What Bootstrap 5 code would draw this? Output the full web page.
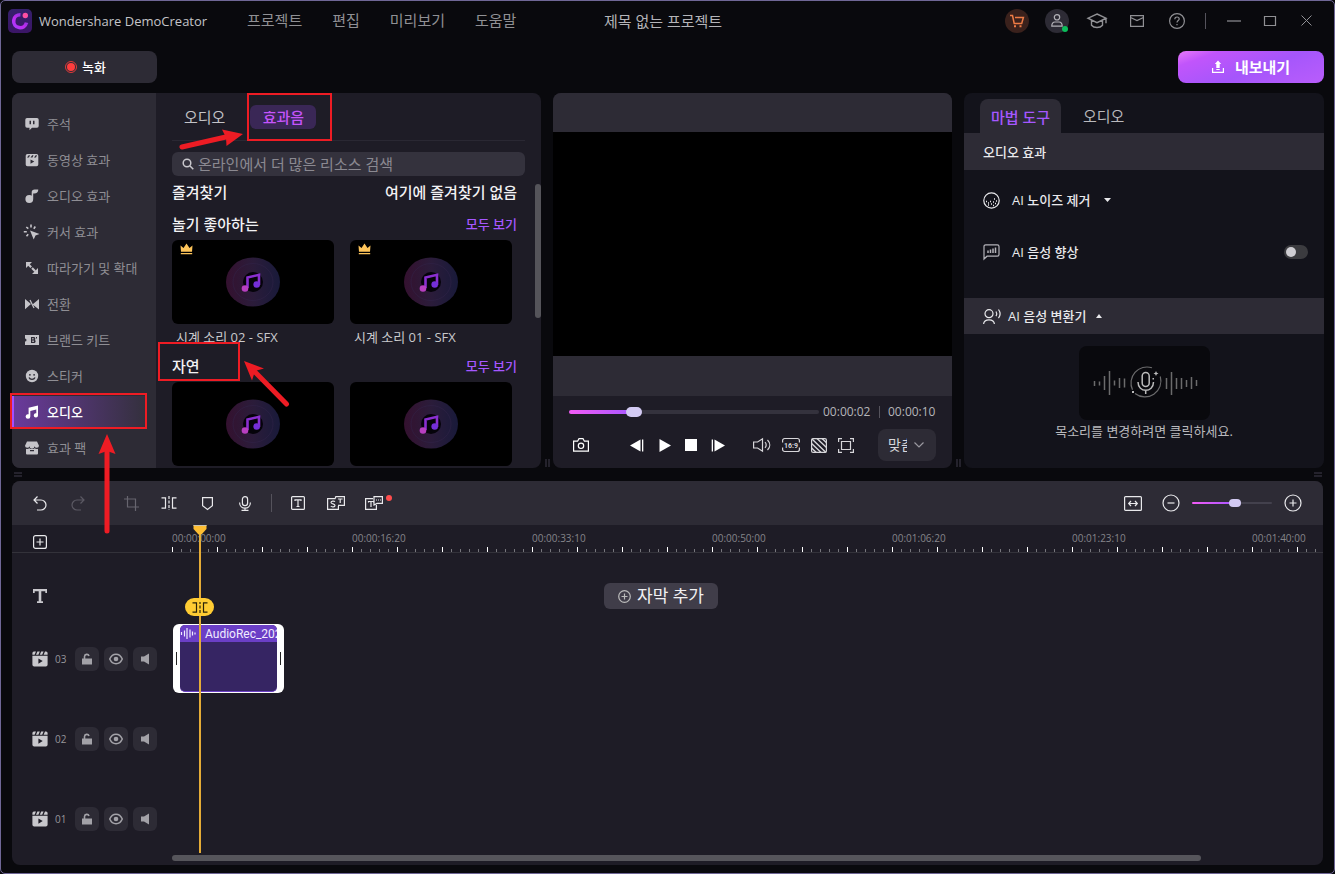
<!DOCTYPE html>
<html lang="ko" data-bs-theme="dark">
<head>
<meta charset="utf-8">
<meta name="viewport" content="width=device-width, initial-scale=1">
<title>Wondershare DemoCreator</title>
<link href="https://cdn.jsdelivr.net/npm/bootstrap@5.3.0/dist/css/bootstrap.min.css" rel="stylesheet">
<style>
:root{--raised:#2d2b35;--panel:#1e1c26;--deep:#13131b;--base:#09090d;--violet:#a557ff;--mark-red:#ee1c24}
body{background:var(--base);color:#e9e9ec;font-family:"Open Sans","Noto Sans CJK KR",sans-serif;font-size:13px;line-height:20px}
svg{display:block;flex:none;overflow:visible}
.ic{fill:none;stroke:currentColor;stroke-width:1.2}
.fl{fill:currentColor;stroke:none}
button,a,input,select{color:inherit}
.app-window{border:1px solid #6f6796;border-radius:5px}
.bare{border:0;background:none;padding:0;display:flex;align-items:center;justify-content:center;flex:none}
.s24{width:24px;height:24px}
.t15{font-size:15px;line-height:22px}
.mid{font-weight:500}
.titlebar{height:39px;display:grid;grid-template-columns:1fr auto 1fr;align-items:center;padding:0 16px 0 7px}
.brand{font-size:13px;color:#c4c4c8;margin:0 0 0 7px;width:208px}
.menus{gap:30px;padding-bottom:2px}
.menus a{color:#909094;text-decoration:none}
.dim{color:#909094}
.vline{width:1px;background:#55535c;flex:none}
.presence{position:absolute;right:1px;bottom:1px;width:6px;height:6px;border-radius:50%;background:#0bbd5b}
.pill-btn{width:145px;height:32px;border:0;border-radius:8px;background:var(--raised)}
.export-btn{width:146px;background:linear-gradient(160deg,#e879f9 0,#c155fb 18%,#a556fb 55%,#b95dfb 100%);color:#fff}
.work{padding:0 10px 8px 11px}
.panels{display:grid;grid-template-columns:529fr 399fr 360fr;gap:12px}
.panel{border-radius:8px;background:var(--panel);position:relative;min-width:0}
.grip-v::after{content:"";position:absolute;right:-9px;bottom:1px;width:5px;height:8px;border:solid #24222c;border-width:0 2px}
.grip-h{width:8px;height:5px;border:solid #24222c;border-width:2px 0}
.split{height:13px;padding:0 2px}
.side{width:144px;flex:none;background:var(--raised);border-radius:8px 0 0 8px;padding:15px 0 0}
.side a{display:flex;align-items:center;gap:8px;height:31px;margin:0 9px 5px 0;padding-left:13px;color:#8f8e94;text-decoration:none;position:relative;white-space:nowrap}
.side a:last-child{margin-bottom:0}
.side svg{color:#c5c4c9}
.side a.active{background:linear-gradient(90deg,#6b3a9d,#33303c);box-shadow:inset 2px 0 #a44dff;color:#fff;font-weight:500}
.side a.active svg{color:#fff}
.hl-box{position:absolute;border:2px solid var(--mark-red);pointer-events:none}
.hl-arrow{position:absolute;pointer-events:none;fill:var(--mark-red);stroke:var(--mark-red);z-index:5}
.lib{padding:0 16px 2px}
.lib-tabs{height:48px;border-bottom:1px solid #2a2833;padding:0 12px}
.lib-tabs .on{width:66px;height:24px;border-radius:6px;background:#3a2756;color:#c554fb}
.search{height:24px;border-radius:6px;background:#34323d;padding:0 10px;gap:4px;margin-top:11px}
.search input{font-size:15px;line-height:24px;border:0;background:none;outline:0;padding:0;min-width:0}
.search input::placeholder{color:#8b8991;opacity:1}
.lib-row{height:32px;padding-right:8px;color:#f2f2f4}
.lib-row a{color:var(--violet);text-decoration:none;font-size:13px}
.thumbs{display:grid;grid-template-columns:1fr 1fr;gap:16px;padding-right:13px}
.thumb{height:84px;border-radius:6px;background:#000;position:relative}
.crown{position:absolute;left:8px;top:3px}
.cap{height:26px;line-height:27px;padding-left:4px;color:#c9c9cc;white-space:nowrap}
.lib-scroll{position:absolute;right:0;top:91px;width:6px;height:134px;border-radius:3px;background:#55545a}
.stage{background:var(--raised);padding:39px 0 40px;border-radius:8px 8px 0 0}
.screen{aspect-ratio:16/9;background:#000}
.times{font-size:12px;color:#b5b5b9}
input[type=range]{appearance:none;-webkit-appearance:none;background:none;margin:0;height:16px;min-width:0}
input[type=range]::-webkit-slider-runnable-track{height:4px;border-radius:2px;background:linear-gradient(90deg,#f35bf5,#a557ff 26%,#34323d 26%)}
input[type=range]::-webkit-slider-thumb{-webkit-appearance:none;width:16px;height:10px;margin-top:-3px;border-radius:5px;background:#d3caf3}
input.zoom-range::-webkit-slider-runnable-track{height:2px;background:linear-gradient(90deg,#f35bf5,#a557ff 54%,#43414d 54%)}
input.zoom-range::-webkit-slider-thumb{width:12px;height:8px;border-radius:4px}
.fit{position:relative;width:58px;height:32px;background:var(--raised);border-radius:8px}
.fit select{appearance:none;border:0;background:none;width:58px;height:32px;padding:0 29px 0 10px;font-size:14px;text-overflow:clip}
.fit svg{position:absolute;right:12px;top:13px;pointer-events:none;color:#9a99a0}
.props{background:var(--deep)}
.props-tabs{padding:6px 16px 0;height:40px}
.props-tabs .on{width:81px;height:34px;background:var(--raised);border-radius:8px 8px 0 0;color:var(--violet);padding-top:2px}
.props-tabs .off{color:#b9b9bd;height:34px;margin-left:22px}
.strip{background:var(--raised);padding:0 19px}
.prop-row{height:52px;padding:0 16px 0 19px}
.switch-sm{appearance:none;-webkit-appearance:none;width:24px;height:14px;border-radius:7px;background:#3b3b3f;margin:0}
.switch-sm::before{content:"";display:block;width:10px;height:10px;border-radius:50%;background:#cfced3;margin:2px}
.voice{width:131px;height:74px;border-radius:8px;background:var(--base);margin:12px auto 0;color:#bbb}
.tl-tools{height:44px;background:var(--raised);border-radius:8px 8px 0 0;padding:0 21px 0 9px}
.tool{width:38px;height:38px}
.heads{width:160px;flex:none}
.ruler{height:28px;border-bottom:1px solid #33323a}
.ruler-scale{overflow:hidden;min-width:0;background:repeating-linear-gradient(90deg,#fff 0 1px,transparent 1px 45px) 0 100%/100% 5px no-repeat,repeating-linear-gradient(90deg,#77767c 0 1px,transparent 1px 9px) 0 100%/100% 3px no-repeat;margin-right:2px}
.ruler-scale span{flex:0 0 180px;font-size:10px;line-height:14px;padding-top:6px;color:#85858a}
.lane{height:80px}
.lane .heads{padding-left:20px}
.sub-lane{padding-top:20px;height:66px}
.add-sub{margin-left:432px;height:26px;width:114px;border-radius:6px;background:#403d49;color:#f0f0f2;font-size:17px;gap:6px;line-height:26px}
.num{font-size:10px;color:#97969b;margin:0 9px 0 7px;width:11px}
.sq{width:24px;height:24px;border-radius:6px;background:var(--raised);color:#a3a2a8}
.clip-box{width:111px;height:69px;margin:0 0 1px 1px;border-radius:6px;background:#fff;padding:1px 7px;position:relative}
.clip-box::before,.clip-box::after{content:"";position:absolute;top:28px;height:13px;width:1px;background:#222}
.clip-box::before{left:3px}.clip-box::after{right:3px}
.clip-in{background:#362563;border-radius:5px;height:67px;overflow:hidden;border-bottom:1px solid #6b3fc6}
.clip-name{background:#6b3fc6;height:17px;line-height:16px;font-family:Roboto,sans-serif;font-size:12px;color:#f1ecff;white-space:nowrap;gap:10px;padding-left:1px}
.playhead{position:absolute;left:187px;top:0;bottom:12px;width:2px;background:#e5ac37}
.playhead svg{position:absolute;left:-6px;top:0}
.cut-chip{position:absolute;left:-14px;top:73px;width:29px;height:18px;border-radius:9px;background:#ffcc33;color:#2a2208}
.playhead .cut-chip svg{position:static}
.h-scroll{position:absolute;left:160px;right:122px;bottom:4px;height:6px;border-radius:3px;background:#56555b}
</style>
</head>
<body>
<svg width="0" height="0" class="position-absolute">
  <defs>
    <linearGradient id="gLogo" x1="1" y1="0" x2="0" y2="1"><stop stop-color="#7a35d8"/><stop offset=".6" stop-color="#c02bf0"/><stop offset="1" stop-color="#a73bff"/></linearGradient>
    <linearGradient id="gBg" x1="0" y1="0" x2="0" y2="1"><stop stop-color="#35206c"/><stop offset="1" stop-color="#3b1566"/></linearGradient>
    <linearGradient id="gDisc"><stop stop-color="#34112f"/><stop offset=".5" stop-color="#2b1c3a"/><stop offset="1" stop-color="#191a3a"/></linearGradient>
    <symbol id="note" viewBox="0 0 14 14"><path d="M3.6 2.7 13 .6v9.7a2.1 2.1 0 1 1-1.7-2V4.5L5.3 5.9v5.6a2.3 2.3 0 1 1-1.7-2.2z"/></symbol>
    <symbol id="film" viewBox="0 0 16 16"><path fill-rule="evenodd" d="M2 .5h2L2.6 3.7H.4V2A1.6 1.6 0 0 1 2 .5zm3.4 0h2.4L6.4 3.7H4zm3.8 0h2.4l-1.4 3.2H7.8zm3.8 0h1A1.6 1.6 0 0 1 15.6 2v1.7h-4zM.4 4.700h15.2v9.1a1.8 1.8 0 0 1-1.8 1.7H2.2a1.8 1.8 0 0 1-1.8-1.7zm6 2.8v5.3L10.700 10.100z"/></symbol>
    <symbol id="disc" viewBox="0 0 54 50"><ellipse cx="27" cy="25" rx="27" ry="24.500" fill="url(#gDisc)"/><ellipse cx="27" cy="25" rx="20" ry="18.500" fill="none" stroke="#33254a" stroke-width=".5"/><circle cx="27" cy="25" r="10" fill="#05030a"/><path d="M21.500 31V20.500L33 17.800V28" fill="none" stroke="#8a2fd0" stroke-width="2.600"/><circle cx="19" cy="31.500" r="3.300" fill="#b83fc0"/><circle cx="30.700" cy="27.500" r="3.300" fill="#742fd8"/></symbol>
    <symbol id="crown" viewBox="0 0 13 12"><path fill="#fdc45a" d="M.5 2.500 3.500 5 6.500.500 9.500 5l3-2.500-.5 6.200H1zM.800 10h11.400v1.300H.800z"/></symbol>
    <symbol id="cut" viewBox="0 0 16 11"><path d="M.500.800h4v9.400h-4M15.500.800h-4v9.400h4" fill="none" stroke="currentColor" stroke-width="1.200"/><path d="M8-1v13" fill="none" stroke="currentColor" stroke-width="1.200" stroke-dasharray="3 1.500"/></symbol>
    <symbol id="lock" viewBox="0 0 12 12"><path d="M1 5.500h10v6H1z" fill="currentColor"/><path d="M3.500 6V3.500a2.300 2.300 0 0 1 4.500-.500" fill="none" stroke="currentColor" stroke-width="1.600"/></symbol>
    <symbol id="eye" viewBox="0 0 14 12"><path d="M.700 6C3.500-.300 10.500-.300 13.300 6 10.500 12.300 3.500 12.300.700 6z" fill="none" stroke="currentColor" stroke-width="1.500"/><circle cx="7" cy="6" r="2.300" fill="currentColor"/></symbol>
    <symbol id="spk" viewBox="0 0 10 12"><path d="M1 3.500h3L9 .500v11L4 8.500H1z" fill="currentColor"/></symbol>
  </defs>
</svg>

<div class="app-window min-vh-100 d-flex flex-column">
  <header class="titlebar">
    <div class="d-flex align-items-center">
      <svg width="24" height="24" viewBox="0 0 24 24"><rect width="24" height="24" rx="5" fill="url(#gBg)"/><path d="M12.500 5.700a6.500 6.500 0 1 0 6 8" fill="none" stroke="url(#gLogo)" stroke-width="3.600"/><circle cx="17.300" cy="6.500" r="2.700" fill="#ff4fa3"/></svg>
      <span class="brand text-nowrap">Wondershare DemoCreator</span>
      <nav class="menus d-flex t15 text-nowrap"><a href="#">프로젝트</a><a href="#">편집</a><a href="#">미리보기</a><a href="#">도움말</a></nav>
    </div>
    <div class="t15 text-nowrap" style="color:#b4b4b8">제목 없는 프로젝트</div>
    <div class="d-flex align-items-center justify-content-end dim">
      <div class="d-flex gap-3 align-items-center">
        <button class="bare s24 rounded-circle" style="background:#3a211c;color:#ee7b45" aria-label="스토어"><svg class="ic" width="14" height="14" viewBox="0 0 14 14" style="stroke-width:1.500"><path d="M0 1.500h2.500l1.700 8h7.500l1.700-6H5"/><path class="fl" d="M4 11.300h2v2H4zM9.500 11.300h2v2h-2z"/></svg></button>
        <button class="bare s24 rounded-circle position-relative" style="background:var(--raised);color:#b3b2b8" aria-label="계정"><svg class="ic" width="12" height="13" viewBox="0 0 12 13"><circle cx="6" cy="3.300" r="2.700"/><path d="M.800 12.200c0-3 1.600-4.200 3.200-4.200h4c1.600 0 3.200 1.200 3.200 4.200z"/></svg><span class="presence"></span></button>
        <button class="bare s24" aria-label="아카데미"><svg class="ic" width="20" height="16" viewBox="0 0 20 16" style="stroke-width:1.400"><path d="M10 1 19 5.200 10 9.600 1 5.200zM4.500 7v5.200c2.500 3 8.500 3 11 0V7M19 5.200v5"/></svg></button>
        <button class="bare s24" aria-label="메시지"><svg class="ic" width="14" height="12" viewBox="0 0 14 12"><path d="M.600.600h12.800v10.800H.600zM.600 2.500 7 5.500l6.400-3"/></svg></button>
        <button class="bare s24" aria-label="도움말"><svg class="ic" width="16" height="16" viewBox="0 0 16 16"><circle cx="8" cy="8" r="7.400"/><path d="M5.800 6.200c0-3 4.400-2.800 4.400-.200 0 1.500-2.200 1.700-2.200 3.500M8 11v1.200"/></svg></button>
        <span class="vline" style="height:16px"></span>
      </div>
      <div class="d-flex ms-3" style="gap:12px">
        <button class="bare s24" aria-label="최소화"><svg class="ic" width="14" height="12" viewBox="0 0 14 12"><path d="M0 6h14"/></svg></button>
        <button class="bare s24" aria-label="최대화"><svg class="ic" width="12" height="10" viewBox="0 0 12 10"><path d="M.500.500h11v9H.500z"/></svg></button>
        <button class="bare s24" aria-label="닫기"><svg class="ic" width="11" height="11" viewBox="0 0 11 11" style="stroke-width:1"><path d="M.500.500l10 10M10.500.500l-10 10"/></svg></button>
      </div>
    </div>
  </header>

  <main class="work flex-grow-1 d-flex flex-column">
    <div class="d-flex justify-content-between" style="padding:11px 0 10px">
      <button class="pill-btn mid d-flex align-items-center justify-content-center pe-1" style="gap:5px;color:#fff"><svg width="12" height="12" viewBox="0 0 12 12"><circle cx="6" cy="6" r="5.500" fill="none" stroke="#e03a3a"/><circle cx="6" cy="6" r="4" fill="#ff3d3d"/></svg>녹화</button>
      <button class="pill-btn export-btn t15 fw-bold d-flex align-items-center justify-content-center" style="gap:11px"><svg width="12" height="12" viewBox="0 0 12 12" fill="none" stroke="#fff"><path d="M.600 7v4.400h10.800V7" stroke-width="1.200"/><path d="M6-.500 9.200 3H7.700v4H4.300V3H2.800zM4.300 8h3.400v1H4.300z" fill="#fff" stroke="none"/></svg>내보내기</button>
    </div>

    <div class="panels">
      <section class="panel grip-v d-flex">
        <nav class="side">
          <a href="#"><svg class="fl" width="14" height="14" viewBox="0 0 14 14"><path fill-rule="evenodd" d="M2 1h10a1.700 1.700 0 0 1 1.700 1.700V9A1.700 1.700 0 0 1 12 10.700H7L4.500 13.300v-2.600H2A1.700 1.700 0 0 1 .300 9V2.700A1.700 1.700 0 0 1 2 1zm2.500 2.800v3.500H6V3.800zm3.500 0v3.500h1.500V3.800z"/></svg>주석</a>
          <a href="#"><svg class="fl" width="14" height="14" viewBox="0 0 14 14"><path fill-rule="evenodd" d="M2.500 1h9A1.800 1.800 0 0 1 13.300 2.800v8.700a1.800 1.800 0 0 1-1.800 1.800h-9A1.800 1.800 0 0 1 .700 11.500V2.800A1.800 1.800 0 0 1 2.500 1zM2 4.500h2L5 2.300H3.700zm3.500 0h2l1-2.200H7.200zm3.500 0h2l1-2.200h-1.300zM5.500 6.500v4.300L9.300 8.600z"/></svg>동영상 효과</a>
          <a href="#"><svg class="fl" width="14" height="14" viewBox="0 0 14 14"><circle cx="4.300" cy="10" r="3.900"/><path d="M6.700 8.500V3.200C6.700 1.300 8 .500 9.500.500h3.800c0 2.700-1.600 4-4 4H8.200v5z"/></svg>오디오 효과</a>
          <a href="#"><svg class="fl" width="14" height="14" viewBox="0 0 14 14"><path d="m5 5.500 9.500 3.500-4 1.500L8.700 14.500z"/><path d="M6 -.500v3M1.300 2l2 1.700M-1.200 6.800h3M10.300 1.500 8.800 3.700M3.200 9.300l-1.700 2" stroke="currentColor" stroke-width="1.600"/></svg>커서 효과</a>
          <a href="#"><svg class="fl" width="14" height="14" viewBox="0 0 14 14"><path d="M1 1h6L1 7zM13 13H7l6-6z"/><path d="m3 3 8 8" stroke="currentColor" stroke-width="2.200" stroke-dasharray="4.500 1.200"/></svg>따라가기 및 확대</a>
          <a href="#"><svg class="fl" width="14" height="14" viewBox="0 0 14 14"><path d="M0 2 6 7 0 12.300zM14 2v10.500L7.500 7.500z"/><path d="M5 3l4 8" stroke="currentColor" stroke-width="1.300"/></svg>전환</a>
          <a href="#"><svg class="fl" width="14" height="14" viewBox="0 0 14 14"><path fill-rule="evenodd" d="M0 2h14v10H0V8.500a1.500 1.500 0 0 0 0-3zm6 2v6h3c2 0 2-2.700.800-3 .900-.700.700-3-1-3zm1.300 1h1.200v1.500H7.300zm0 2.500h1.500V9H7.300zM11 4v1.500h1V4z"/></svg>브랜드 키트</a>
          <a href="#"><svg class="fl" width="14" height="14" viewBox="0 0 14 14"><circle cx="7" cy="7" r="6.200"/><g fill="#2d2b35"><circle cx="4.900" cy="5.800" r=".9"/><circle cx="9.100" cy="5.800" r=".9"/></g><path d="M4 8.500c1 2.500 5 2.500 6 0" fill="none" stroke="#2d2b35" stroke-width="1.300"/></svg>스티커</a>
          <a href="#" class="active"><svg class="fl" width="14" height="14"><use href="#note"/></svg>오디오
            <span class="hl-box" style="left:-2px;top:-3px;right:0;height:36px"></span>
            <svg class="hl-arrow" style="left:86px;top:38px" width="18" height="102" viewBox="0 0 18 102"><path d="M9 0 17.500 20 9 17 .500 20z" stroke="none"/><path d="M9 16v81" stroke-width="5" stroke-linecap="round"/></svg></a>
          <a href="#"><svg class="fl" width="14" height="14" viewBox="0 0 14 14"><path d="M2 .500h10l2 4.200a2.300 2.300 0 0 1-4.500.500 2.500 2.500 0 0 1-5 0A2.300 2.300 0 0 1 0 4.700z"/><path fill-rule="evenodd" d="M1 7.800c1.300.500 2.500.200 3.300-.600 1.500 1.200 3.900 1.200 5.400 0 .800.800 2 1.100 3.300.600v4.700a1 1 0 0 1-1 1H2a1 1 0 0 1-1-1zM5 9v1.300h4V9z"/></svg>효과 팩</a>
        </nav>
        <div class="lib flex-grow-1 position-relative">
          <div class="lib-tabs d-flex align-items-center t15">
            <button class="bare" style="color:#c3c3c7;margin-right:25px">오디오</button>
            <div class="position-relative"><button class="bare on mid">효과음</button>
              <span class="hl-box" style="left:-3px;top:-12px;width:85px;height:48px"></span>
              <svg class="hl-arrow" style="left:-72px;top:24px" width="66" height="22" viewBox="0 0 66 22"><path d="M65 5 44 .500 48 8.500 48.500 17z" stroke="none"/><path d="M4 18 50 7.500" stroke-width="5" stroke-linecap="round"/></svg></div>
          </div>
          <label class="search d-flex align-items-center"><svg class="ic" width="12" height="12" viewBox="0 0 12 12" style="color:#c9c8cd;stroke-width:1.500"><circle cx="5" cy="5" r="3.800"/><path d="m8 8 3.300 3.300"/></svg><input class="flex-grow-1" type="text" placeholder="온라인에서 더 많은 리소스 검색" aria-label="검색"></label>
          <div class="lib-row d-flex align-items-center justify-content-between t15 mid"><span>즐겨찾기</span><span>여기에 즐겨찾기 없음</span></div>
          <div class="lib-row d-flex align-items-center justify-content-between t15 mid"><span>놀기 좋아하는</span><a href="#">모두 보기</a></div>
          <div class="thumbs">
            <div><div class="thumb d-flex align-items-center justify-content-center"><svg class="crown" width="13" height="12"><use href="#crown"/></svg><svg width="54" height="50"><use href="#disc"/></svg></div><div class="cap">시계 소리 02 - SFX</div></div>
            <div><div class="thumb d-flex align-items-center justify-content-center"><svg class="crown" width="13" height="12"><use href="#crown"/></svg><svg width="54" height="50"><use href="#disc"/></svg></div><div class="cap">시계 소리 01 - SFX</div></div>
          </div>
          <div class="lib-row d-flex align-items-center justify-content-between t15 mid position-relative"><span>자연</span><a href="#">모두 보기</a>
            <span class="hl-box" style="left:-14px;top:-8px;width:82px;height:39px"></span>
            <svg class="hl-arrow" style="left:72px;top:11px" width="44" height="46" viewBox="0 0 44 46"><path d="M0 0 20 7.500 11 10 8 19.500z" stroke="none"/><path d="M9 9 42.500 43" stroke-width="5" stroke-linecap="round"/></svg></div>
          <div class="thumbs">
            <div class="thumb d-flex align-items-center justify-content-center"><svg width="54" height="50"><use href="#disc"/></svg></div>
            <div class="thumb d-flex align-items-center justify-content-center"><svg width="54" height="50"><use href="#disc"/></svg></div>
          </div>
          <span class="lib-scroll"></span>
        </div>
      </section>

      <section class="panel grip-v">
        <div class="stage"><div class="screen"></div></div>
        <div class="d-flex align-items-center times px-3" style="height:32px">
          <input class="flex-grow-1" type="range" min="0" max="1000" value="244" aria-label="재생 위치">
          <span class="ms-1" style="width:48px">00:00:02</span><span class="vline mx-2" style="height:12px"></span><span style="width:48px">00:00:10</span>
        </div>
        <div class="d-flex align-items-center" style="padding:1px 16px 7px 20px;color:#fff">
          <button class="bare" aria-label="스냅샷"><svg class="ic" width="16" height="14" viewBox="0 0 16 14"><path d="M.600 3.200h4L6 .700h4l1.400 2.500h4v10H.600z"/><circle cx="8" cy="7.800" r="2.700"/></svg></button>
          <div class="d-flex align-items-center" style="gap:14px;margin-left:41px">
            <button class="bare" aria-label="이전 프레임"><svg class="fl" width="14" height="13" viewBox="0 0 14 13"><path d="M10.500.500v12L0 6.500zM12 .500h1.300v12H12z"/></svg></button>
            <button class="bare" aria-label="재생"><svg class="fl" width="13" height="13" viewBox="0 0 13 13"><path d="M1.500 0v13L13 6.500z"/></svg></button>
            <button class="bare" aria-label="정지"><svg class="fl" width="12" height="12" viewBox="0 0 12 12"><path d="M0 0h12v12H0z"/></svg></button>
            <button class="bare" aria-label="다음 프레임"><svg class="fl" width="14" height="13" viewBox="0 0 14 13"><path d="M3.500.500v12L14 6.500zM.700.500H2v12H.700z"/></svg></button>
          </div>
          <div class="d-flex align-items-center ms-auto" style="gap:11px;color:#d7d6da">
            <button class="bare" aria-label="볼륨"><svg class="ic" width="18" height="14" viewBox="0 0 18 14"><path d="M.600 4h4L9.500.800v12.400L4.600 10h-4zM12 4.200c1.600 1.600 1.600 4 0 5.600M14.500 2c3 3 3 7 0 10"/></svg></button>
            <button class="bare" aria-label="화면 비율"><svg class="ic" width="18" height="14" viewBox="0 0 18 14"><path d="M.600 4.500V2.500a2 2 0 0 1 2-2h12.800a2 2 0 0 1 2 2v2M.600 9.500v2a2 2 0 0 0 2 2h12.800a2 2 0 0 0 2-2v-2"/><text x="9" y="9.500" text-anchor="middle" font-size="7" font-weight="700" class="fl" font-family="Roboto">16:9</text></svg></button>
            <button class="bare" aria-label="배경"><svg class="ic" width="16" height="15" viewBox="0 0 16 15"><rect x=".6" y=".6" width="14.800" height="13.800" rx="1.500"/><path d="m1 1 14 13.500M6 .600l9.500 9M11 .600l4.500 4.200M.600 5.500l9.500 9M.600 10l4.700 4.500" stroke-width="1.400"/></svg></button>
            <button class="bare" aria-label="전체 화면"><svg class="ic" width="16" height="15" viewBox="0 0 16 15"><path d="M.600 4V.600H4M12 .600h3.400V4M15.400 11v3.400H12M4 14.400H.600V11M3.500 3.500h9v8h-9z"/></svg></button>
            <div class="fit" style="margin-left:13px"><select aria-label="미리보기 크기"><option>맞춤</option><option>100%</option></select><svg class="ic" width="10" height="6" viewBox="0 0 10 6"><path d="m.500.500 4.500 4.500L9.500.500"/></svg></div>
          </div>
        </div>
      </section>

      <section class="panel props">
        <div class="props-tabs d-flex t15"><button class="bare on mid">마법 도구</button><button class="bare off">오디오</button></div>
        <div class="strip mid d-flex align-items-center" style="height:37px">오디오 효과</div>
        <div style="padding:4px 0 20px">
          <div class="prop-row mid d-flex align-items-center"><svg class="ic me-2" width="17" height="17" viewBox="0 0 17 17"><circle cx="8.500" cy="8.500" r="7.700"/><path d="M3 9.500h1M5 11h1M7 9.500h1M8 12h1M10 10h1M11 7h1M12 11.500h1M13 9h1M5 13h1M10 13.500h1" stroke-width="1.300"/></svg><span class="ms-1">AI 노이즈 제거</span><svg class="fl" style="margin-left:14px" width="7" height="4" viewBox="0 0 7 4"><path d="M0 0h7L3.500 4z"/></svg></div>
          <label class="prop-row mid d-flex align-items-center"><svg class="ic me-2" width="17" height="16" viewBox="0 0 17 16" style="color:#b4b3b9"><path d="M1 15V2.500A1.700 1.700 0 0 1 2.700.800h11.600A1.700 1.700 0 0 1 16 2.500v8a1.700 1.700 0 0 1-1.700 1.700H4z"/><path d="M5 6.500v2.500M7.500 5.500v3.500M10 4.500v4.500M12.500 3.500v5.500" stroke-width="1.500"/></svg><span class="ms-1">AI 음성 향상</span><input type="checkbox" class="switch-sm ms-auto"></label>
        </div>
        <div class="strip mid d-flex align-items-center" style="height:36px"><svg class="ic" style="margin-right:7px" width="18" height="15" viewBox="0 0 18 15"><circle cx="6" cy="4.700" r="4"/><path d="M.600 15c.4-5.500 10.400-5.500 10.800 0M13 2.500c1 1.500 1 3.200 0 4.700M15.500.500c2 2.700 2 6 0 8.700"/></svg>AI 음성 변환기<svg class="fl" style="margin-left:10px" width="6" height="4" viewBox="0 0 6 4"><path d="M0 4h6L3 0z"/></svg></div>
        <button class="bare voice" aria-label="음성 변환"><svg class="ic" width="104" height="34" viewBox="-2 0 104 34"><g opacity=".55"><path d="M.500 15v5M5.500 15.500v4M10.500 10v14M15.500 5v24M20.500 14.500v5M25.500 12v10M30.500 12.500v9M72.500 12v11M77.500 6v23M82.500 12v11M87.500 12v11M92.500 14v7M97.500 11v12M102.500 14v6" stroke-width="1.500"/><path d="M58 1.800a16 16 0 0 0-19.500 22M41 27.500A16 16 0 0 0 66.300 10.500"/></g><rect x="48.200" y="6.500" width="7" height="14" rx="3.500" style="stroke-width:1.500"/><path d="M44 16c0 11 15.500 11 15.500 0M51.700 24v4" style="stroke-width:1.500"/><path class="fl" d="m62 5 .8 1.700 1.700.8-1.700.8L62 10l-.8-1.700-1.700-.8 1.700-.8zM58.500 12h1.500v1.500h-1.500zM38 25h2v2h-2z"/></svg></button>
        <div class="text-center" style="padding-top:1px;color:#b9b9bd">목소리를 변경하려면 클릭하세요.</div>
      </section>
    </div>

    <div class="split d-flex align-items-center justify-content-between"><span class="grip-h"></span><span class="grip-h"></span></div>

    <section class="panel flex-grow-1" style="margin-right:1px">
      <div class="tl-tools d-flex align-items-center">
        <button class="bare tool" aria-label="실행 취소"><svg class="ic" width="14" height="15" viewBox="0 0 14 15"><path d="M4.500.500 1 4l3.500 3.500M1.500 4H8a5 5 0 0 1 0 10H4"/></svg></button>
        <button class="bare tool" style="color:#5b5963" aria-label="다시 실행"><svg class="ic" width="14" height="15" viewBox="0 0 14 15"><path d="M9.500.500 13 4 9.500 7.500M12.500 4H6a5 5 0 0 0 0 10h4"/></svg></button>
        <button class="bare tool" style="margin-left:15px;color:#67656f" aria-label="자르기"><svg class="ic" width="15" height="15" viewBox="0 0 15 15"><path d="M0 3h11.500v8M3.500 0v11H15M11.500 11v4"/></svg></button>
        <button class="bare tool" aria-label="분할"><svg class="ic" width="16" height="12" viewBox="0 0 16 12"><path d="M.500.800h4v10.400h-4M15.500.800h-4v10.400h4"/><path d="M8-1v14" stroke-dasharray="3 1.500"/></svg></button>
        <button class="bare tool" aria-label="마커"><svg class="ic" width="11" height="13" viewBox="0 0 11 13"><path d="M.600.600h9.800v8L5.500 12.400.600 8.600z"/></svg></button>
        <button class="bare tool" aria-label="음성 녹음"><svg class="ic" width="12" height="15" viewBox="0 0 12 15"><rect x="3.400" y=".6" width="5.200" height="9" rx="2.600"/><path d="M.600 6.500c0 7.500 10.800 7.500 10.800 0M6 12v2.400M2.500 14.400h7"/></svg></button>
        <span class="vline" style="height:18px;margin:0 7px"></span>
        <button class="bare tool" aria-label="텍스트"><svg class="ic" width="14" height="14" viewBox="0 0 14 14"><rect x=".6" y=".6" width="12.800" height="12.800" rx="1"/><path d="M4 5V3.800h6V5M7 3.800v6.700M5.500 10.500h3"/></svg></button>
        <button class="bare tool" aria-label="음성을 텍스트로"><svg class="ic" width="18" height="14" viewBox="0 0 18 14"><path d="M8.500 2.600H.600v10.800h10.800V10M8.500.600h8.900v8.800H11M8.500.600v2M11.500 3.500V3h3.500v.500M13.200 3v4"/><path d="M8 5.700c-1-1-4-.8-4 .8s4 1.200 4 2.900-3.300 1.800-4.200.6"/></svg></button>
        <button class="bare tool position-relative" aria-label="텍스트를 음성으로"><svg class="ic" width="18" height="14" viewBox="0 0 18 14"><path d="M8 2.600H.600v10.800h10.800V9M3.500 6.500V5.500h5v1M6 5.500v5.500M9 .600h8.400v6.800H12L9 9z"/><path d="M11 4h1M13 4h1M15 4h1"/></svg><span class="presence" style="background:#ff4d4d;right:1px;bottom:21px"></span></button>
        <div class="d-flex align-items-center ms-auto">
          <button class="bare" aria-label="맞춤"><svg class="ic" width="18" height="15" viewBox="0 0 18 15"><rect x=".6" y=".6" width="16.800" height="13.800" rx="1"/><path d="M7 5 4.700 7.500 7 10M11 5l2.300 2.500L11 10M5 7.500h8"/></svg></button>
          <button class="bare" style="margin:0 12px 0 20px" aria-label="축소"><svg class="ic" width="18" height="18" viewBox="0 0 18 18"><circle cx="9" cy="9" r="8"/><path d="M5.500 9h7"/></svg></button>
          <input class="zoom-range" style="width:80px" type="range" min="0" max="100" value="54" aria-label="타임라인 확대">
          <button class="bare" style="margin-left:12px" aria-label="확대"><svg class="ic" width="18" height="18" viewBox="0 0 18 18"><circle cx="9" cy="9" r="8"/><path d="M5.500 9h7M9 5.500v7"/></svg></button>
        </div>
      </div>
      <div class="position-relative" style="padding-bottom:6px">
        <div class="ruler d-flex">
          <div class="heads d-flex" style="padding:10px 0 0 21px"><button class="bare" style="height:14px" aria-label="트랙 추가"><svg class="ic" width="14" height="14" viewBox="0 0 14 14"><rect x=".6" y=".6" width="12.800" height="12.800" rx="2"/><path d="M3.500 7h7M7 3.500v7"/></svg></button></div>
          <div class="ruler-scale d-flex flex-grow-1"><span>00:00:00:00</span><span>00:00:16:20</span><span>00:00:33:10</span><span>00:00:50:00</span><span>00:01:06:20</span><span>00:01:23:10</span><span>00:01:40:00</span></div>
        </div>
        <div class="sub-lane d-flex align-items-center">
          <div class="heads" style="padding-left:21px"><svg class="fl" style="color:#c8c7cc" width="14" height="14" viewBox="0 0 14 14"><path d="M0 0h14v4h-1.700V2.200H8.300v10H10V14H4v-1.800h1.700v-10h-4V4H0z"/></svg></div>
          <button class="bare add-sub"><svg class="ic" width="13" height="13" viewBox="0 0 13 13" style="color:#bbb"><circle cx="6.500" cy="6.500" r="5.800"/><path d="M3.500 6.500h6M6.500 3.500v6"/></svg>자막 추가</button>
        </div>
        <div class="lane d-flex align-items-center">
          <div class="heads d-flex align-items-center"><svg class="fl" style="color:#c8c7cc" width="16" height="16"><use href="#film"/></svg><span class="num">03</span><div class="d-flex" style="gap:5px"><button class="bare sq" aria-label="잠금"><svg width="12" height="12"><use href="#lock"/></svg></button><button class="bare sq" aria-label="표시"><svg width="14" height="12"><use href="#eye"/></svg></button><button class="bare sq" aria-label="음소거"><svg width="10" height="12"><use href="#spk"/></svg></button></div></div>
          <div class="clip-box"><div class="clip-in"><div class="clip-name d-flex align-items-center"><svg class="ic" width="14" height="11" viewBox="0 0 14 11"><path d="M.500 4v3M3.500 2.500v6M6 0v11M9 1.500v8M11.500 3.500v4M14 4.500v2"/></svg>AudioRec_202</div></div></div>
        </div>
        <div class="lane d-flex align-items-center">
          <div class="heads d-flex align-items-center"><svg class="fl" style="color:#c8c7cc" width="16" height="16"><use href="#film"/></svg><span class="num">02</span><div class="d-flex" style="gap:5px"><button class="bare sq" aria-label="잠금"><svg width="12" height="12"><use href="#lock"/></svg></button><button class="bare sq" aria-label="표시"><svg width="14" height="12"><use href="#eye"/></svg></button><button class="bare sq" aria-label="음소거"><svg width="10" height="12"><use href="#spk"/></svg></button></div></div>
        </div>
        <div class="lane d-flex align-items-center">
          <div class="heads d-flex align-items-center"><svg class="fl" style="color:#c8c7cc" width="16" height="16"><use href="#film"/></svg><span class="num">01</span><div class="d-flex" style="gap:5px"><button class="bare sq" aria-label="잠금"><svg width="12" height="12"><use href="#lock"/></svg></button><button class="bare sq" aria-label="표시"><svg width="14" height="12"><use href="#eye"/></svg></button><button class="bare sq" aria-label="음소거"><svg width="10" height="12"><use href="#spk"/></svg></button></div></div>
        </div>
        <div class="playhead"><svg width="14" height="10" viewBox="0 0 14 10"><path d="M.500 0h13v4L8.500 9.500h-3L.500 4z" fill="#fdbd32"/><path d="M.500 0h13v1H.500z" fill="#c9c2b0"/></svg><button class="bare cut-chip" aria-label="재생 위치에서 분할"><svg width="16" height="11"><use href="#cut"/></svg></button></div>
        <span class="h-scroll"></span>
      </div>
    </section>
  </main>
</div>
<script src="https://cdn.jsdelivr.net/npm/bootstrap@5.3.0/dist/js/bootstrap.bundle.min.js"></script>
</body>
</html>
